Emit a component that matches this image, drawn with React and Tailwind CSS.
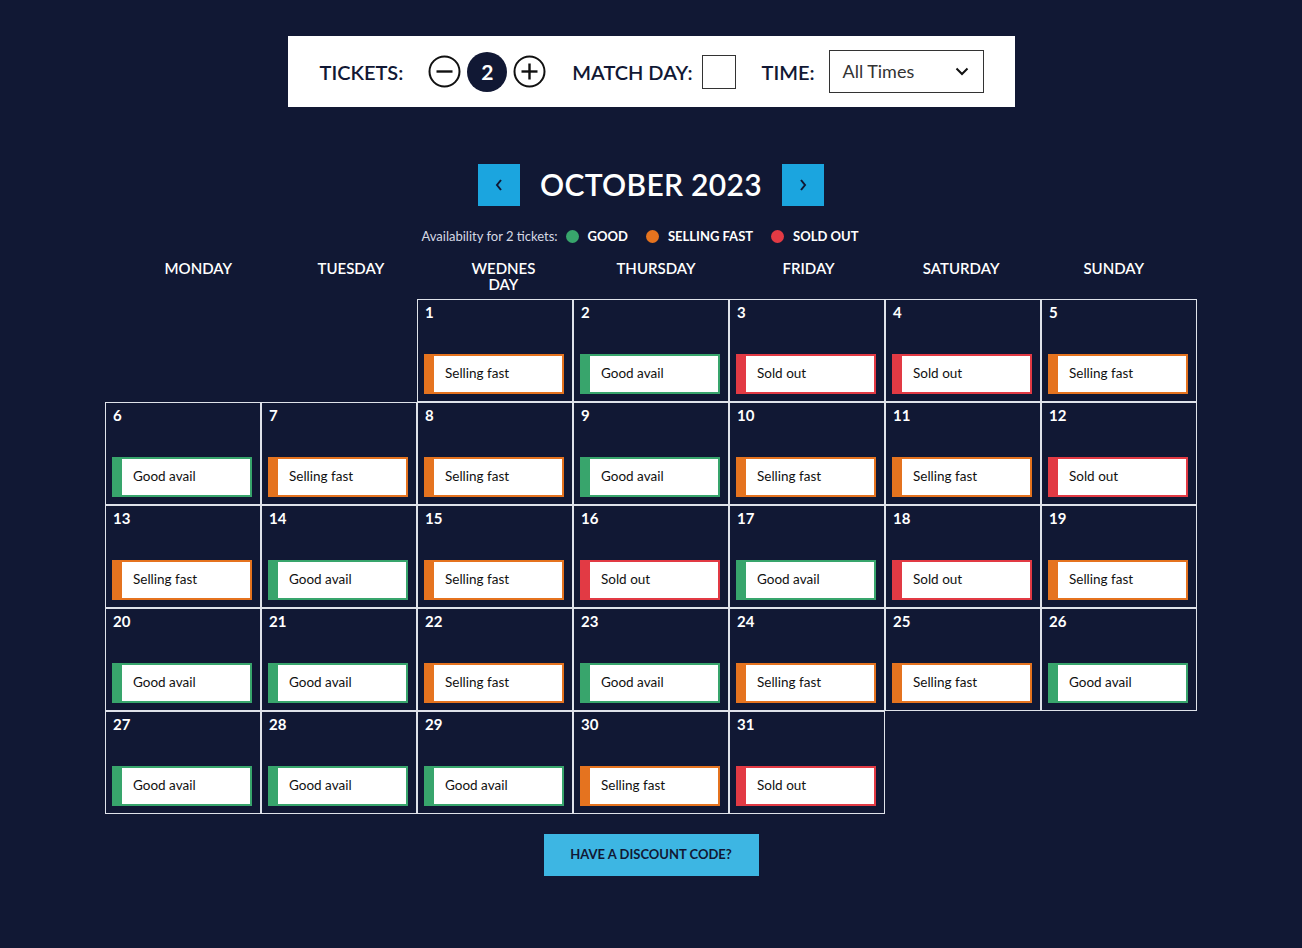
import React from "react";

const F = { fontFamily: "Lato, 'Noto Sans', sans-serif" };

const S = {
  G: { label: "Good avail", color: "#38a56c" },
  S: { label: "Selling fast", color: "#e5731f" },
  X: { label: "Sold out", color: "#e23a44" },
};

const statuses = "SGXXSGSSGSSXSGSXGXSGGSGSSGGGGSX".split("");

const days = ["MONDAY", "TUESDAY", "WEDNES DAY", "THURSDAY", "FRIDAY", "SATURDAY", "SUNDAY"];

function Badge({ s }) {
  const c = S[s];
  return (
    <div
      className="flex h-[40px] w-[140px] items-stretch bg-white border-2"
      style={{ borderColor: c.color }}
    >
      <div className="w-[8px]" style={{ background: c.color }} />
      <div className="flex items-center pl-[11px] text-[13.5px] text-[#111]">{c.label}</div>
    </div>
  );
}

function Cell({ d }) {
  if (!d) return <div className="h-[103px]" />;
  return (
    <div className="flex h-[103px] flex-col border border-[#dfe2ea] pl-[6px] pt-[2px]">
      <div className="h-[52px] pl-[1px] text-[15px] font-bold text-white leading-[20px]">{d}</div>
      <Badge s={statuses[d - 1]} />
    </div>
  );
}

function CircleBtn({ plus }) {
  return (
    <svg width="33" height="33" viewBox="0 0 33 33">
      <circle cx="16.5" cy="16.5" r="15" fill="none" stroke="#111" strokeWidth="2" />
      <line x1="8.5" y1="16.5" x2="24.5" y2="16.5" stroke="#111" strokeWidth="2.4" />
      {plus && <line x1="16.5" y1="8.5" x2="16.5" y2="24.5" stroke="#111" strokeWidth="2.4" />}
    </svg>
  );
}

export default function App() {
  const cells = [null, null];
  for (let i = 1; i <= 31; i++) cells.push(i);
  while (cells.length < 35) cells.push(null);

  return (
    <div className="min-h-[948px] w-full bg-[#111834] pt-[36px]" style={F}>
      <div className="mx-auto flex h-[71px] w-[727px] items-center bg-white pl-[32px] text-[#111834]">
        <span className="text-[20px] font-semibold">TICKETS:</span>
        <div className="ml-[25px] flex items-center gap-[6px]">
          <CircleBtn />
          <div className="flex h-[40px] w-[40px] items-center justify-center rounded-full bg-[#111834] text-[21px] font-bold text-white">
            2
          </div>
          <CircleBtn plus />
        </div>
        <span className="ml-[26px] text-[20px] font-semibold">MATCH DAY:</span>
        <div className="ml-[10px] h-[34px] w-[34px] border border-[#333]" />
        <span className="ml-[25px] text-[20px] font-semibold">TIME:</span>
        <div className="ml-[14px] flex h-[43px] w-[155px] items-center justify-between border border-[#333] pl-[13px] pr-[14px] text-[18px] text-[#333]">
          <span>All Times</span>
          <svg width="14" height="9" viewBox="0 0 14 9">
            <path d="M1.5 1.5 L7 7 L12.5 1.5" fill="none" stroke="#111" strokeWidth="2" />
          </svg>
        </div>
      </div>

      <div className="mt-[55px] flex items-center justify-center">
        <div className="flex h-[42px] w-[42px] items-center justify-center bg-[#1ba5df]">
          <svg width="10" height="14" viewBox="0 0 10 14">
            <path d="M7 2 L3 7 L7 12" fill="none" stroke="#111834" strokeWidth="2" />
          </svg>
        </div>
        <div className="mx-[20px] text-[30px] font-semibold tracking-[0.3px] text-white">OCTOBER 2023</div>
        <div className="flex h-[42px] w-[42px] items-center justify-center bg-[#1ba5df]">
          <svg width="10" height="14" viewBox="0 0 10 14">
            <path d="M3 2 L7 7 L3 12" fill="none" stroke="#111834" strokeWidth="2" />
          </svg>
        </div>
      </div>

      <div className="mt-[20px] flex items-center justify-center pr-[22px] text-[13px] text-white">
        <span className="text-[#d6d9e4]">Availability for 2 tickets:</span>
        <span className="ml-[8px] h-[13px] w-[13px] rounded-full bg-[#38a56c]" />
        <span className="ml-[9px] font-bold">GOOD</span>
        <span className="ml-[18px] h-[13px] w-[13px] rounded-full bg-[#e5731f]" />
        <span className="ml-[9px] font-bold">SELLING FAST</span>
        <span className="ml-[18px] h-[13px] w-[13px] rounded-full bg-[#e23a44]" />
        <span className="ml-[9px] font-bold">SOLD OUT</span>
      </div>

      <div className="mt-[13px] flex justify-center pl-[10px]">
        <div className="grid w-[1068px] grid-cols-7">
          {days.map((d) => (
            <div key={d} className="h-[39px] text-center text-[15px] font-semibold leading-[16px] text-white">
              {d === "WEDNES DAY" ? (
                <>
                  <div>WEDNES</div>
                  <div>DAY</div>
                </>
              ) : (
                d
              )}
            </div>
          ))}
        </div>
      </div>

      <div className="mx-auto grid w-[1092px] grid-cols-7">
        {cells.map((d, i) => (
          <Cell key={i} d={d} />
        ))}
      </div>

      <div className="mt-[20px] flex justify-center">
        <div className="flex h-[42px] w-[215px] items-center justify-center bg-[#3db6e3] text-[13px] font-bold text-[#111834]">
          HAVE A DISCOUNT CODE?
        </div>
      </div>
    </div>
  );
}
